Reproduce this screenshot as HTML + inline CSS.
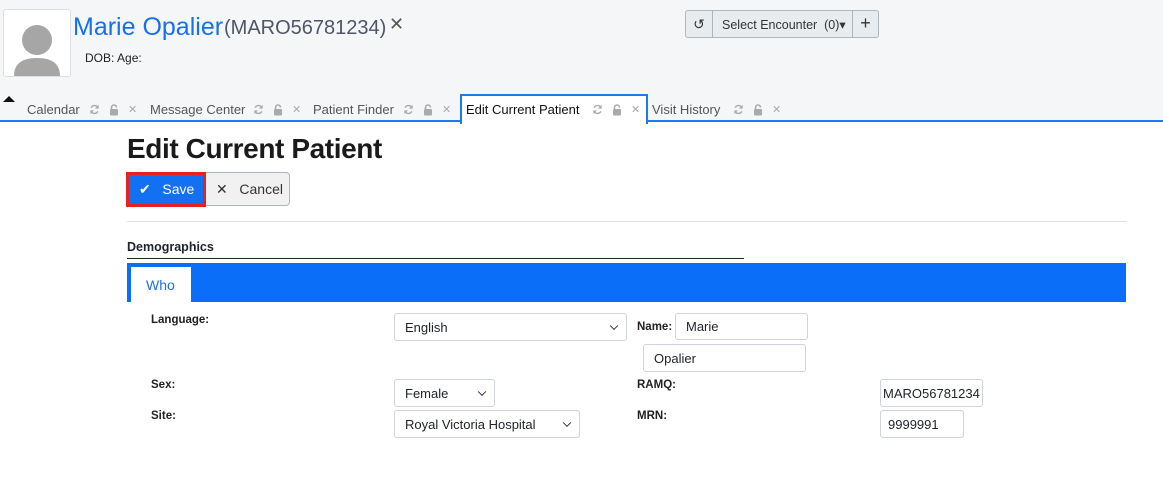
<!DOCTYPE html>
<html><head><meta charset="utf-8"><style>
*{box-sizing:border-box;margin:0;padding:0}
body{width:1163px;height:486px;background:#fff;font-family:"Liberation Sans",sans-serif;position:relative;overflow:hidden;color:#212529}
.hdr{position:absolute;left:0;top:0;width:1163px;height:122px;background:#f5f6f8;border-bottom:2px solid #1a7cf0}
.abs{position:absolute;white-space:nowrap}
.av{left:3px;top:9px;width:68px;height:68px;background:#fff;border:1px solid #dde0e3;border-radius:3px;overflow:hidden}
.tab{font-size:13px;color:#555;top:102px}
.ic{color:#aaa;font-size:11px;display:flex;align-items:center;gap:9px}
.inp{position:absolute;border:1px solid #ced4da;border-radius:3px;background:#fff;font-size:13px;padding-left:10px;display:flex;align-items:center;color:#212529}
.sel::after{content:"";position:absolute;right:9px;top:50%;width:5px;height:5px;border-right:1.6px solid #333;border-bottom:1.6px solid #333;transform:translateY(-70%) rotate(45deg)}
.lbl{font-size:11.5px;font-weight:bold;color:#222}
</style></head><body>
<div class="hdr"></div>
<div class="abs av"><svg width="68" height="68"><circle cx="33" cy="30" r="15" fill="#a6a6a6"/><path d="M10 66 Q10 48 33 48 Q56 48 56 66Z" fill="#a6a6a6"/></svg></div>
<div class="abs" style="left:73px;top:13px;font-size:25px;color:#1570f0">Marie Opalier</div>
<div class="abs" style="left:224px;top:17px;font-size:20px;color:#4e5566">(MARO56781234)</div>
<div class="abs" style="left:389px;top:14px;font-size:18px;color:#555">✕</div>
<div class="abs" style="left:85px;top:51px;font-size:12px;color:#222">DOB: Age:</div>
<div class="abs" style="left:685px;top:10px;width:194px;height:28px;border:1px solid #adb5bd;border-radius:3px;background:#e9ecef;font-size:12.5px;color:#333">
<div class="abs" style="left:0;top:0;width:27px;height:26px;border-right:1px solid #adb5bd;text-align:center;line-height:26px;font-size:14px">↺</div>
<div class="abs" style="left:36px;top:6px">Select Encounter&nbsp; (0)▾</div>
<div class="abs" style="left:166px;top:0;width:26px;height:26px;border-left:1px solid #adb5bd;text-align:center;line-height:25px;font-size:18px">+</div>
</div>
<div class="abs" style="left:3px;top:96px;width:0;height:0;border-left:6px solid transparent;border-right:6px solid transparent;border-bottom:6px solid #111"></div>
<div class="abs" style="left:460px;top:94px;width:188px;height:30px;background:#fff;border:2px solid #1a7cf0;border-bottom:none"></div>
<svg width="0" height="0" style="position:absolute"><symbol id="lk" viewBox="0 0 10 12"><path d="M2.5 5V3.5a2.5 2.5 0 0 1 5 0" fill="none" stroke="#aaa" stroke-width="1.6"/><rect x="1" y="5" width="8" height="6.5" rx="1" fill="#aaa"/></symbol><symbol id="rf" viewBox="0 0 12 12"><path d="M10 4.5A4.2 4.2 0 0 0 2.3 4M2 7.5A4.2 4.2 0 0 0 9.7 8" fill="none" stroke="#aaa" stroke-width="1.6"/><path d="M10.5 1v4h-4zM1.5 11V7h4z" fill="#aaa"/></symbol></svg>
<div class="abs tab" style="left:27px">Calendar</div><div class="abs tab ic" style="left:89px;top:103px"><svg width="11" height="11"><use href="#rf"/></svg><svg width="10" height="12"><use href="#lk"/></svg><span>✕</span></div>
<div class="abs tab" style="left:150px">Message Center</div><div class="abs tab ic" style="left:253px;top:103px"><svg width="11" height="11"><use href="#rf"/></svg><svg width="10" height="12"><use href="#lk"/></svg><span>✕</span></div>
<div class="abs tab" style="left:313px">Patient Finder</div><div class="abs tab ic" style="left:403px;top:103px"><svg width="11" height="11"><use href="#rf"/></svg><svg width="10" height="12"><use href="#lk"/></svg><span>✕</span></div>
<div class="abs tab" style="left:466px;color:#111">Edit Current Patient</div><div class="abs tab ic" style="left:592px;top:103px"><svg width="11" height="11"><use href="#rf"/></svg><svg width="10" height="12"><use href="#lk"/></svg><span>✕</span></div>
<div class="abs tab" style="left:652px">Visit History</div><div class="abs tab ic" style="left:733px;top:103px"><svg width="11" height="11"><use href="#rf"/></svg><svg width="10" height="12"><use href="#lk"/></svg><span>✕</span></div>

<div class="abs" style="left:127px;top:133px;font-size:28px;font-weight:bold;color:#1a1a1a;letter-spacing:-0.4px">Edit Current Patient</div>
<div class="abs" style="left:204px;top:172px;width:86px;height:34px;border:1px solid #adb5bd;border-radius:0 4px 4px 0;background:#f1f1f1;font-size:14px;color:#333;padding:8px 0 0 11px">✕&nbsp;&nbsp; Cancel</div>
<div class="abs" style="left:126px;top:172px;width:80px;height:35px;border:3px solid #e8211c;background:#1270f2;color:#fff;font-size:14px;padding:6px 0 0 10px">✔&nbsp;&nbsp; Save</div>
<div class="abs" style="left:127px;top:221px;width:1000px;height:1px;background:#e2e2e2"></div>
<div class="abs" style="left:127px;top:240px;font-size:12.5px;font-weight:bold">Demographics</div>
<div class="abs" style="left:127px;top:258px;width:617px;height:1px;background:#222"></div>
<div class="abs" style="left:127px;top:263px;width:999px;height:39px;background:#0a6ef8"></div>
<div class="abs" style="left:131px;top:267px;width:60px;height:35px;background:#fff;color:#1a6ef0;font-size:14px;padding:10px 0 0 15px">Who</div>

<div class="abs lbl" style="left:151px;top:314px">Language:</div>
<div class="inp sel" style="left:394px;top:313px;width:233px;height:28px">English</div>
<div class="abs lbl" style="left:637px;top:321px">Name:</div>
<div class="inp" style="left:675px;top:313px;width:133px;height:27px">Marie</div>
<div class="inp" style="left:643px;top:344px;width:163px;height:28px">Opalier</div>
<div class="abs lbl" style="left:151px;top:379px">Sex:</div>
<div class="inp sel" style="left:394px;top:379px;width:101px;height:28px">Female</div>
<div class="abs lbl" style="left:637px;top:379px">RAMQ:</div>
<div class="inp" style="left:880px;top:379px;width:103px;height:28px;padding-left:2px">MARO56781234</div>
<div class="abs lbl" style="left:151px;top:410px">Site:</div>
<div class="inp sel" style="left:394px;top:410px;width:186px;height:28px">Royal Victoria Hospital</div>
<div class="abs lbl" style="left:637px;top:410px">MRN:</div>
<div class="inp" style="left:880px;top:410px;width:84px;height:28px;padding-left:7px">9999991</div>
</body></html>
